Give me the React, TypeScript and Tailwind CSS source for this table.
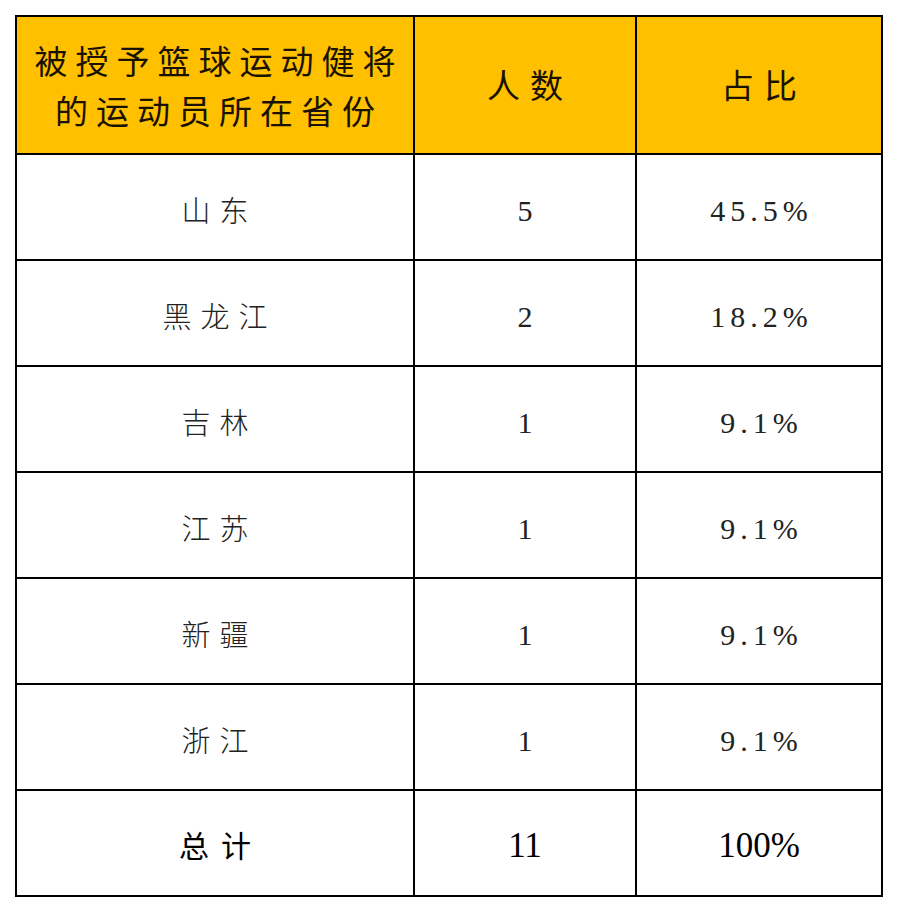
const rows = [
  { province: "山东", count: "5", share: "45.5%" },
  { province: "黑龙江", count: "2", share: "18.2%" },
  { province: "吉林", count: "1", share: "9.1%" },
  { province: "江苏", count: "1", share: "9.1%" },
  { province: "新疆", count: "1", share: "9.1%" },
  { province: "浙江", count: "1", share: "9.1%" },
];

const cjk = "font-['Noto_Sans_CJK_SC',sans-serif]";
const serif = "font-['Liberation_Serif','Times_New_Roman',serif]";

function Cell({ children, head = false }: { children: React.ReactNode; head?: boolean }) {
  return (
    <div className={`flex items-center justify-center text-center ${head ? "bg-[#ffc000]" : "bg-white"}`}>
      {children}
    </div>
  );
}

export default function App() {
  return (
    <div className="w-[898px] h-[912px] bg-white pt-[15px] pl-[15px]">
      <div className="grid w-[868px] grid-cols-[396px_220px_244px] grid-rows-[136px_repeat(7,104px)] gap-[2px] bg-black p-[2px] text-black">
        <Cell head>
          <div className={`${cjk} text-[33px] leading-[50px] tracking-[8px] pl-[8px] text-[#1a1200]`}>
            <div>被授予篮球运动健将</div>
            <div>的运动员所在省份</div>
          </div>
        </Cell>
        <Cell head>
          <span className={`${cjk} text-[33px] tracking-[10px] pl-[10px] text-[#1a1200]`}>人数</span>
        </Cell>
        <Cell head>
          <span className={`${cjk} text-[33px] tracking-[10px] pl-[10px] text-[#1a1200]`}>占比</span>
        </Cell>

        {rows.map((r) => (
          <div key={r.province} className="contents">
            <Cell>
              <span className={`${cjk} text-[29px] font-light tracking-[9px] pl-[9px] pt-[6px] text-[#222]`}>{r.province}</span>
            </Cell>
            <Cell>
              <span className={`${serif} text-[30px] pt-[6px] text-[#222]`}>{r.count}</span>
            </Cell>
            <Cell>
              <span className={`${serif} text-[30px] tracking-[5px] pl-[5px] pt-[6px] text-[#222]`}>{r.share}</span>
            </Cell>
          </div>
        ))}

        <Cell>
          <span className={`${cjk} text-[30px] tracking-[12px] pl-[12px] pt-[2px]`}>总计</span>
        </Cell>
        <Cell>
          <span className={`${serif} text-[35px] pt-[6px]`}>11</span>
        </Cell>
        <Cell>
          <span className={`${serif} text-[35px] pt-[6px]`}>100%</span>
        </Cell>
      </div>
    </div>
  );
}
